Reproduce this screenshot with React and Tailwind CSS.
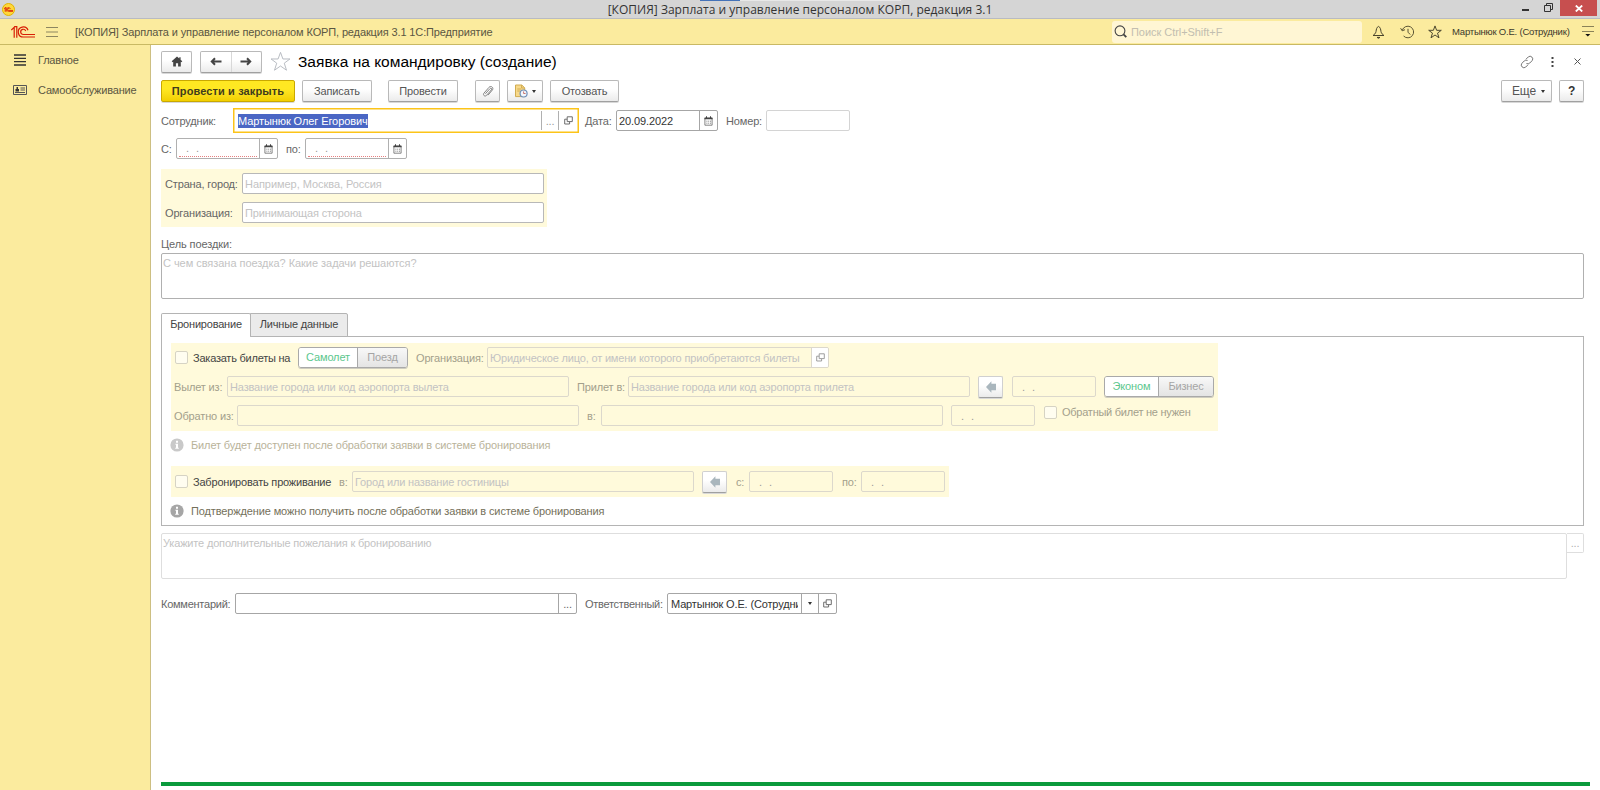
import clsx from "clsx";

const Logo = ({ className, width, height, color, stroke }) => (
    <svg className={className} width={width} height={height} viewBox="0 0 24 12" fill="none" stroke={color} strokeWidth={stroke}>
        <path d="M0.3 4 3.2 1.3V11.8M3.200.7H5.800V11.800" />
        <path d="M17 4.300A5 5 0 1 0 12.300 11H24" />
        <path d="M14.700 4.900A2.600 2.600 0 1 0 12.300 8.500H24" />
    </svg>
);

const HomeIcon = () => (
    <svg width="12" height="11" viewBox="0 0 12 11" fill="#444">
        <path d="M6 0.500 0.700 5.300l.9.9.6-.5V10.500h2.700V7.300h2.200v3.200h2.700V5.700l.6.5.9-.9L9.600 3.800V1.200H8.300v1.400z" />
    </svg>
);

const ArrowIcon = ({ className }) => (
    <svg className={className} width="12" height="9" viewBox="0 0 12 9" fill="none" stroke="#444" strokeWidth="2">
        <path d="M11.500 4.500H1.800M5 1.300 1.800 4.500 5 7.700" />
    </svg>
);

const StarIcon = ({ size, color, stroke }) => (
    <svg width={size} height={size} viewBox="0 0 20 20" fill="none" stroke={color} strokeWidth={stroke}>
        <path d="M10 1.3 12.3 7.6H19L13.6 11.6 15.7 18.3 10 14.3 4.3 18.3 6.4 11.6 1 7.6H7.7z" />
    </svg>
);

const ClipIcon = () => (
    <svg width="12" height="13" viewBox="0 0 12 13" fill="none" stroke="#777" strokeWidth=".9">
        <path d="M3.400 8.700 8 3.600c1-1.100 2.300.1 1.400 1.200L4.500 10.400c-1.600 1.700-4.100-.4-2.500-2.300L7 2.300c2-2.200 5.200.5 3.300 2.800L6 10.200" />
    </svg>
);

const DocClockIcon = () => (
    <svg width="14" height="14" viewBox="0 0 14 14" fill="none">
        <path d="M1.5 1H7.8L10.7 3.8V12.6H1.5z" fill="#f8d98a" stroke="#d0ac52" />
        <path d="M7.6 1v3h3M3.3 5h4M3.3 7h2.5" stroke="#d0ac52" />
        <circle cx="9.6" cy="9.5" r="3.5" fill="#f3f7fc" stroke="#6f8fb8" strokeWidth="1.200" />
        <path d="M9.6 7.4v2.1h2" stroke="#c9776f" />
    </svg>
);

const CalendarIcon = () => (
    <svg width="9" height="10" viewBox="0 0 9 10" fill="none">
        <path d="M0.9 1.9H8.1V9.2H0.9z" stroke="#666" strokeWidth=".8" />
        <path d="M0.500 1.700h8v1.500h-8zM2 0.200h1v2H2zM6 .2h1v2H6z" fill="#444" />
        <path d="M2.4 5.2h4.6M2.4 7.2h4.6" stroke="#777" strokeWidth=".9" strokeDasharray="1 .8" />
    </svg>
);

const OpenIcon = ({ color = "#666" }) => (
    <svg width="9" height="9" viewBox="0 0 9 9" fill="none" stroke={color} strokeWidth=".95">
        <path d="M3.2 .8H8.3V5.6H3.2zM3 3.2H.7V8H5.6V6" />
    </svg>
);

const LeftIcon = () => (
    <svg width="10" height="12" viewBox="0 0 10 12" fill="#a9b6bd">
        <path d="M0 6 5.4.2V2.8H10V9.2H5.4v2.6z" />
    </svg>
);

const InfoIcon = ({ color }) => (
    <svg width="14" height="14" viewBox="0 0 14 14">
        <circle cx="7" cy="7" r="6.6" fill={color} />
        <path d="M6 2.8h2v1.9H6zM5.4 5.8H8v4h.8v1H5.2v-1H6V6.8h-.6z" fill="#fff" />
    </svg>
);

const BellIcon = () => (
    <svg width="13" height="14" viewBox="0 0 13 14" fill="none" stroke="#4a452c">
        <path d="M6.500 1.400C4.600 2.200 4.300 4.500 4 6.600 3.700 8.400 2.300 9.600 1 10.500H12C10.700 9.600 9.300 8.400 9 6.600 8.700 4.500 8.400 2.200 6.500 1.400z" />
        <path d="M5 12.400h3l-1.500.8z" fill="#222" />
    </svg>
);

const HistoryIcon = () => (
    <svg width="15" height="14" viewBox="0 0 15 14" fill="none" stroke="#5a5434">
        <path d="M2.300 5.200A5.800 5.800 0 1 1 3.600 11" />
        <path d="M.6 3.200 2.200 5.800 5 4.700M8 3.800V7.200L10.200 9.500" />
    </svg>
);

const LinkIcon = () => (
    <svg width="14" height="14" viewBox="0 0 14 14" fill="none" stroke="#777" strokeLinecap="round">
        <path d="M6.300 3.900 8.300 1.900a2.700 2.700 0 0 1 3.800 3.800L9.700 8.100a2.700 2.700 0 0 1-2.900.6" />
        <path d="M7.700 10.100 5.700 12.100a2.700 2.700 0 0 1-3.800-3.800L4.300 5.900a2.700 2.700 0 0 1 2.900-.6" />
    </svg>
);

const Caret = () => <span className="h-0 w-0 border-x-[2.5px] border-t-[3px] border-x-transparent border-t-[#333]" />;

const Button = ({ className, children }) => (
    <button
        className={clsx(
            "flex h-[22px] shrink-0 items-center justify-center rounded-[2px] border border-[#b9b9b9] border-b-[#a0a0a0] bg-linear-to-b from-white from-40% to-[#ebebeb] text-[#555] shadow-[0_1px_0_#d8d8d8]",
            className
        )}
    >
        {children}
    </button>
);

const Label = ({ className, children }) => <span className={clsx("shrink-0 whitespace-nowrap", className)}>{children}</span>;

const Field = ({ className, children }) => (
    <div className={clsx("flex h-[21px] shrink-0 items-center overflow-hidden rounded-[2px] border", className)}>{children}</div>
);

const Hint = ({ children }) => <span className="flex-1 whitespace-nowrap pl-[2px] text-[#c3c3c3]">{children}</span>;

const DateField = ({ className }) => (
    <Field className={clsx("border-[#dcd8cc] pl-[9px] tracking-[2px] text-[#999]", className)}>
        <span className="whitespace-pre">. .</span>
    </Field>
);

const RequiredDate = () => (
    <Field className="w-[102px] border-[#b0b0b0] bg-white">
        <span className="ml-[2px] mr-[2px] h-[17px] flex-1 whitespace-pre border-b border-dotted border-[#e58080] pl-[7px] leading-[17px] tracking-[2px] text-[#999]">
            . .
        </span>
        <span className="flex h-full w-[18px] items-center justify-center border-l border-[#b0b0b0]">
            <CalendarIcon />
        </span>
    </Field>
);

const CheckBox = () => <span className="h-[13px] w-[13px] shrink-0 rounded-[2px] border border-[#d6d3c4] bg-[#fffdf0]" />;

const Toggle = ({ items, left, className }) => (
    <div
        className={clsx(
            "flex h-[21px] shrink-0 overflow-hidden rounded-[3px] border border-[#a9a9a9] text-center leading-[19px] shadow-[0_1px_0_#cfcdc0]",
            className
        )}
    >
        <span className={clsx("bg-white text-[#5cc78e]", left)}>{items[0]}</span>
        <span className="flex-1 border-l border-[#a9a9a9] bg-linear-to-b from-[#f8f8f8] to-[#e4e4e4] text-[#a5a5a5]">{items[1]}</span>
    </div>
);

const TitleBar = () => (
    <div className="relative flex h-[19px] items-start justify-center border-b border-[#b9bbc2] bg-[#d5d5d5]">
        <span className="absolute left-[2px] top-[3px] flex h-[13px] w-[13px] items-center justify-center rounded-full border border-[#e2b400] bg-[#ffd83b]">
            <Logo width="9" height="5" color="#d81e05" stroke="2.2" />
        </span>
        <span className="absolute left-[700px] top-0 h-px w-10 bg-[#4472b8]" />
        <span className="absolute left-[740px] top-0 h-px w-[161px] bg-[#e8e8e8]" />
        <span className="whitespace-nowrap font-['Open_Sans','Noto_Sans',sans-serif] text-[12px] leading-[19px] tracking-[0.020px] text-[#333]">
            [КОПИЯ] Зарплата и управление персоналом КОРП, редакция 3.1
        </span>
        <div className="absolute right-[3px] top-0 flex h-[16px] items-center">
            <span className="mr-[15px] mt-[4px] h-[2px] w-[7px] bg-[#333]" />
            <svg className="mb-[1px] mr-[7px]" width="9" height="9" viewBox="0 0 9 9" fill="none" stroke="#333">
                <path d="M.5 2.500h6v6h-6zM2.500 2V.5h6v6H7" />
            </svg>
            <span className="flex h-[16px] w-[37px] items-center justify-center bg-[#c74f4f]">
                <svg width="8" height="7" viewBox="0 0 8 7" stroke="#fff" strokeWidth="1.800">
                    <path d="M.8.5 7.200 6.500M7.200.5.8 6.500" />
                </svg>
            </span>
        </div>
    </div>
);

const Header = () => (
    <div className="flex h-[26px] items-center border-b border-[#c9b964] bg-[#fbeb9e] text-[#5a5642]">
        <Logo className="ml-[11px]" width="24" height="12" color="#d81e05" stroke="1.200" />
        <svg className="ml-[11px]" width="12" height="10" viewBox="0 0 12 10" stroke="#8d8660">
            <path d="M0 .5h12M0 5h12M0 9.500h12" />
        </svg>
        <span className="ml-[17px] tracking-[-0.130px]">[КОПИЯ] Зарплата и управление персоналом КОРП, редакция 3.1 1С:Предприятие</span>
        <div className="ml-auto flex h-[22px] w-[250px] items-center rounded-[3px] bg-[#fff6d4] text-[#c2beb0]">
            <svg className="ml-[2px]" width="13" height="13" viewBox="0 0 13 13" fill="none" stroke="#444" strokeWidth="1.100">
                <circle cx="6" cy="5.8" r="4.9" />
                <path d="M9.500 9.300 12.300 12.200" strokeWidth="1.800" />
            </svg>
            <span className="ml-[4px] tracking-[-0.050px]">Поиск Ctrl+Shift+F</span>
        </div>
        <div className="ml-[10px] flex w-[228px] items-center">
            <BellIcon />
            <span className="ml-[15px]">
                <HistoryIcon />
            </span>
            <span className="ml-[13px]">
                <StarIcon size={14} color="#4a452c" stroke={1.400} />
            </span>
            <span className="ml-[10px] whitespace-nowrap text-[9.5px] tracking-[-0.210px] text-[#3a382c]">Мартынюк О.Е. (Сотрудник)</span>
            <svg className="ml-[12px] shrink-0" width="12" height="11" viewBox="0 0 12 11">
                <path d="M0 .5h12M0 5.500h12" stroke="#8a8258" />
                <path d="M3.300 8h5L5.800 10.500z" fill="#111" />
            </svg>
        </div>
    </div>
);

const Sidebar = () => (
    <div className="w-[151px] shrink-0 border-r border-[#cdbf82] bg-[#fbeb9e] text-[#5a5642]">
        <div className="flex h-[30px] items-center pl-[14px]">
            <svg width="12" height="12" viewBox="0 0 12 12" stroke="#333" strokeWidth="1.300">
                <path d="M0 1h12M0 4.300h12M0 7.700h12M0 11h12" />
            </svg>
            <span className="ml-[12px] tracking-[-0.200px]">Главное</span>
        </div>
        <div className="flex h-[29px] items-center pl-[13px]">
            <svg width="14" height="10" viewBox="0 0 14 10" fill="none" stroke="#555">
                <path d="M.5.5h13v9H.5z" />
                <path d="M7.500 3H12M7.500 5H12M2 7.500H12" />
                <path d="M3.500 2h1.500v2h1v2.500h-3.500V4h1z" fill="#333" stroke="none" />
            </svg>
            <span className="ml-[11px] tracking-[-0.180px]">Самообслуживание</span>
        </div>
    </div>
);

const Toolbar = () => (
    <>
        <div className="flex h-[21px] items-center">
            <Button className="w-[31px]">
                <HomeIcon />
            </Button>
            <Button className="ml-[8px] w-[62px]">
                <span className="flex h-full flex-1 items-center justify-center border-r border-[#d8d8d8]">
                    <ArrowIcon />
                </span>
                <span className="flex flex-1 justify-center">
                    <ArrowIcon className="rotate-180" />
                </span>
            </Button>
            <span className="ml-[8px]">
                <StarIcon size={21} color="#b4b8be" stroke={0.900} />
            </span>
            <h1 className="ml-[7px] text-[15.5px] tracking-normal text-black">Заявка на командировку (создание)</h1>
            <div className="ml-auto mr-[1px] flex items-center">
                <LinkIcon />
                <svg className="ml-[17px]" width="3" height="10" viewBox="0 0 3 10" fill="#444">
                    <path d="M.5 0h2v2h-2zM.5 4h2v2h-2zM.5 8h2v2h-2z" />
                </svg>
                <svg className="ml-[20px] mr-[2px]" width="7" height="7" viewBox="0 0 7 7" stroke="#555">
                    <path d="M.5.5 6.500 6.500M6.500.5.5 6.500" />
                </svg>
            </div>
        </div>
        <div className="mt-[8px] flex h-[22px] items-center">
            <Button className="w-[134px] border-[#c9a800]! bg-linear-to-b from-[#ffe822]! to-[#f2cf00]! font-bold tracking-[0.120px] text-[#413c1c]!">
                Провести и закрыть
            </Button>
            <Button className="ml-[7px] w-[70px]">Записать</Button>
            <Button className="ml-[16px] w-[70px]">Провести</Button>
            <Button className="ml-[17px] w-[25px]">
                <ClipIcon />
            </Button>
            <Button className="ml-[7px] w-[36px] gap-[4px]">
                <DocClockIcon />
                <Caret />
            </Button>
            <Button className="ml-[7px] w-[69px]">Отозвать</Button>
            <Button className="ml-auto w-[51px] gap-[5px] pl-1 text-[12px]">
                Еще
                <Caret />
            </Button>
            <Button className="ml-[7px] w-[25px] text-[12px] font-bold text-[#333]!">?</Button>
        </div>
    </>
);

const Booking = () => (
    <div className="h-[190px] border border-[#b4b4b4] pl-[9px] pt-[6px] text-[#a3a08c]">
        <div className="h-[88px] w-[1047px] bg-[#fffadb] pl-[3px] pt-[4px]">
            <div className="flex h-[21px] items-center">
                <span className="w-[1px]" />
                <CheckBox />
                <Label className="ml-[5px] w-[105px] tracking-[-0.230px] text-[#444]">Заказать билеты на</Label>
                <Toggle items={["Самолет", "Поезд"]} left="w-[58px]" className="w-[110px]" />
                <Label className="ml-[8px] w-[71px]">Организация:</Label>
                <Field className="w-[342px] border-[#dcd8cc]">
                    <Hint>
                        <span className="tracking-[-0.170px]">Юридическое лицо, от имени которого приобретаются билеты</span>
                    </Hint>
                    <span className="flex h-full w-[17px] items-center justify-center border-l border-[#dcd8cc] bg-white">
                        <OpenIcon color="#999" />
                    </span>
                </Field>
            </div>
            <div className="mt-[8px] flex h-[21px] items-center">
                <Label className="w-[53px]">Вылет из:</Label>
                <Field className="w-[342px] border-[#dcd8cc]">
                    <Hint>Название города или код аэропорта вылета</Hint>
                </Field>
                <Label className="ml-[8px] w-[51px]">Прилет в:</Label>
                <Field className="w-[342px] border-[#dcd8cc]">
                    <Hint>Название города или код аэропорта прилета</Hint>
                </Field>
                <Button className="ml-[8px] w-[25px] border-[#d0d0d0]">
                    <LeftIcon />
                </Button>
                <DateField className="ml-[9px] w-[84px]" />
                <Toggle items={["Эконом", "Бизнес"]} left="w-[53px]" className="ml-[8px] w-[110px]" />
            </div>
            <div className="mt-[8px] flex h-[21px] items-center">
                <Label className="w-[63px]">Обратно из:</Label>
                <Field className="w-[342px] border-[#dcd8cc]" />
                <Label className="ml-[8px] w-[14px]">в:</Label>
                <Field className="w-[342px] border-[#dcd8cc]" />
                <DateField className="ml-[8px] w-[84px]" />
                <div className="mb-[7px] ml-[9px] flex items-center">
                    <CheckBox />
                    <Label className="ml-[5px] tracking-[-0.250px]">Обратный билет не нужен</Label>
                </div>
            </div>
        </div>
        <div className="ml-[-1px] flex h-[28px] items-center text-[#b9b39a]">
            <InfoIcon color="#c9c9c9" />
            <Label className="ml-[7px] tracking-[-0.130px]">Билет будет доступен после обработки заявки в системе бронирования</Label>
        </div>
        <div className="mt-[7px] flex h-[31px] w-[778px] items-center bg-[#fffadb] pl-[4px]">
            <CheckBox />
            <Label className="ml-[5px] w-[146px] tracking-[-0.200px] text-[#444]">Забронировать проживание</Label>
            <Label className="w-[13px]">в:</Label>
            <Field className="w-[342px] border-[#dcd8cc]">
                <Hint>Город или название гостиницы</Hint>
            </Field>
            <Button className="ml-[8px] w-[25px] border-[#d0d0d0]">
                <LeftIcon />
            </Button>
            <Label className="ml-[9px] w-[13px]">с:</Label>
            <DateField className="w-[84px]" />
            <Label className="ml-[9px] w-[19px]">по:</Label>
            <DateField className="w-[84px]" />
        </div>
        <div className="ml-[-1px] flex h-[28px] items-center text-[#74705a]">
            <InfoIcon color="#a6a6a6" />
            <Label className="ml-[7px] tracking-[-0.130px]">Подтверждение можно получить после обработки заявки в системе бронирования</Label>
        </div>
    </div>
);

export default function App() {
    return (
        <div className="flex h-[790px] w-[1600px] flex-col overflow-hidden bg-white font-['Liberation_Sans',Arial,sans-serif] text-[11px] leading-[14px] tracking-[-0.150px]">
            <TitleBar />
            <Header />
            <div className="flex flex-1">
                <Sidebar />
                <div className="flex flex-1 flex-col pb-[4px] pl-[10px] pr-[16px] pt-[6px] text-[#666]">
                    <Toolbar />

                    <div className="mt-[6px] flex h-[25px] items-center">
                        <Label className="w-[72px]">Сотрудник:</Label>
                        <div className="flex h-[25px] w-[346px] items-center border border-[#fcc419] py-[2px] pl-[4px] shadow-[inset_0_0_0_0.5px_#fcc419]">
                            <span className="bg-[#4a66c4] tracking-[-0.090px] text-white">Мартынюк Олег Егорович</span>
                            <span className="ml-auto flex h-full w-[17px] items-center justify-center border-l border-[#b0b0b0] text-[#999]">...</span>
                            <span className="flex h-full w-[20px] items-center justify-center border-l border-[#b0b0b0]">
                                <OpenIcon />
                            </span>
                        </div>
                        <Label className="ml-[6px] w-[31px]">Дата:</Label>
                        <Field className="w-[102px] border-[#a6a6a6]">
                            <span className="flex-1 pl-[2px] tracking-[-0.100px] text-[#333]">20.09.2022</span>
                            <span className="flex h-full w-[18px] items-center justify-center border-l border-[#a6a6a6]">
                                <CalendarIcon />
                            </span>
                        </Field>
                        <Label className="ml-[8px] w-[40px]">Номер:</Label>
                        <Field className="w-[84px] border-[#d4d4d4]" />
                    </div>

                    <div className="mt-[5px] flex h-[21px] items-center">
                        <Label className="w-[15px]">С:</Label>
                        <RequiredDate />
                        <Label className="ml-[8px] w-[19px]">по:</Label>
                        <RequiredDate />
                    </div>

                    <div className="mt-[10px] flex h-[58px] w-[386px] flex-col gap-[8px] bg-[#fffadb] pl-[4px] pt-[4px]">
                        <div className="flex items-center">
                            <Label className="w-[77px]">Страна, город:</Label>
                            <Field className="w-[302px] border-[#b8b8b8] bg-white">
                                <Hint>
                                    <span className="tracking-[-0.050px]">Например, Москва, Россия</span>
                                </Hint>
                            </Field>
                        </div>
                        <div className="flex items-center">
                            <Label className="w-[77px]">Организация:</Label>
                            <Field className="w-[302px] border-[#b8b8b8] bg-white">
                                <Hint>Принимающая сторона</Hint>
                            </Field>
                        </div>
                    </div>

                    <Label className="mt-[10px] tracking-[-0.100px]">Цель поездки:</Label>
                    <div className="mt-[2px] h-[46px] rounded-[2px] border border-[#b0b0b0] pl-[1px] pt-[2px] tracking-[-0.040px] text-[#c3c3c3]">
                        С чем связана поездка? Какие задачи решаются?
                    </div>

                    <div className="relative z-10 mb-[-1px] mt-[14px] flex h-[24px] leading-[21px] tracking-[-0.200px] text-[#444]">
                        <span className="w-[90px] rounded-t-[2px] border border-b-0 border-[#b4b4b4] bg-white text-center">Бронирование</span>
                        <span className="ml-[-1px] w-[98px] rounded-tr-[2px] border border-[#b4b4b4] bg-[#ebebeb] text-center">Личные данные</span>
                    </div>
                    <Booking />

                    <div className="mt-[7px] flex items-start">
                        <div className="h-[46px] flex-1 rounded-[2px] border border-[#dedede] pl-[1px] pt-[2px] tracking-[-0.170px] text-[#c3c3c3]">
                            Укажите дополнительные пожелания к бронированию
                        </div>
                        <span className="h-[20px] w-[17px] rounded-r-[2px] border border-l-0 border-[#dedede] pt-[2px] text-center text-[#b0b0b0]">...</span>
                    </div>

                    <div className="mt-[14px] flex h-[21px] items-center">
                        <Label className="w-[74px] tracking-[-0.250px]">Комментарий:</Label>
                        <Field className="w-[342px] border-[#a6a6a6]">
                            <span className="ml-auto flex h-full w-[18px] items-center justify-center border-l border-[#a6a6a6]">...</span>
                        </Field>
                        <Label className="ml-[8px] w-[82px] tracking-[-0.280px]">Ответственный:</Label>
                        <Field className="w-[170px] border-[#a6a6a6] text-[#333]">
                            <span className="ml-[3px] mr-[3px] flex-1 overflow-hidden whitespace-nowrap">Мартынюк О.Е. (Сотрудник)</span>
                            <span className="flex h-full w-[17px] shrink-0 items-center justify-center border-l border-[#a6a6a6]">
                                <Caret />
                            </span>
                            <span className="flex h-full w-[18px] shrink-0 items-center justify-center border-l border-[#a6a6a6]">
                                <OpenIcon />
                            </span>
                        </Field>
                    </div>

                    <div className="mr-[-6px] mt-auto h-[4px] bg-[#0a9a3c]" />
                </div>
            </div>
        </div>
    );
}
